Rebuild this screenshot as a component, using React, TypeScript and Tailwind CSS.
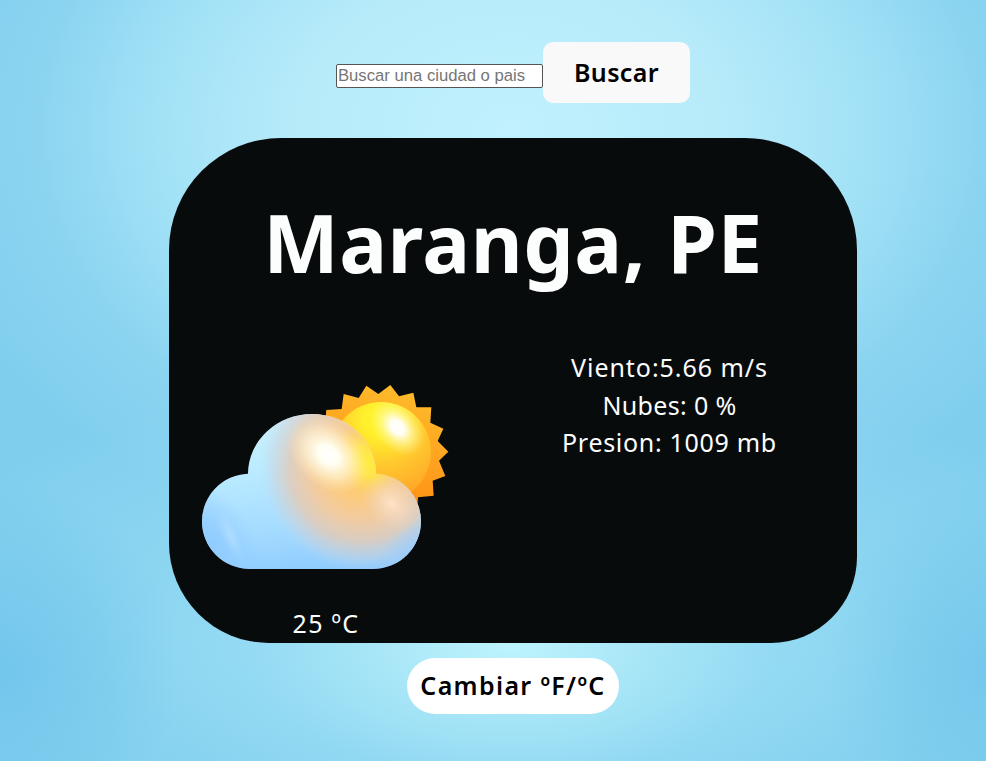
function WeatherIcon() {
  return (
    <svg viewBox="0 0 810 630" className="block h-[210px] w-[270px]" aria-label="Parcialmente nublado">
      <defs>
        <linearGradient id="rays" x1="0.9" y1="0" x2="0.6" y2="1">
          <stop offset="0" stopColor="#ffc02c" />
          <stop offset="0.5" stopColor="#ffa621" />
          <stop offset="1" stopColor="#ff8f14" />
        </linearGradient>
        <radialGradient id="disc" gradientUnits="userSpaceOnUse" cx="575" cy="145" r="250">
          <stop offset="0" stopColor="#fff62a" />
          <stop offset="0.22" stopColor="#fff02c" />
          <stop offset="0.55" stopColor="#ffc92e" />
          <stop offset="1" stopColor="#ffa328" />
        </radialGradient>
        <radialGradient id="shine" gradientUnits="userSpaceOnUse" cx="0" cy="0" r="1" gradientTransform="translate(622 172) rotate(48) scale(98 68)">
          <stop offset="0" stopColor="#fff" />
          <stop offset="0.25" stopColor="#fff" stopOpacity="0.95" />
          <stop offset="0.6" stopColor="#fffbc0" stopOpacity="0.5" />
          <stop offset="1" stopColor="#fff6a0" stopOpacity="0" />
        </radialGradient>
        <linearGradient id="cloud" x1="0.3" y1="0.15" x2="0.42" y2="0.98">
          <stop offset="0" stopColor="#d4eff8" />
          <stop offset="0.35" stopColor="#bcecff" />
          <stop offset="0.7" stopColor="#a6ddff" />
          <stop offset="1" stopColor="#8dcafe" />
        </linearGradient>
        <radialGradient id="shade" gradientUnits="userSpaceOnUse" cx="0" cy="0" r="1" gradientTransform="translate(60 520) rotate(55) scale(200 135)">
          <stop offset="0" stopColor="#90ccff" />
          <stop offset="0.4" stopColor="#90ccff" stopOpacity="0.7" />
          <stop offset="1" stopColor="#90ccff" stopOpacity="0" />
        </radialGradient>
        <radialGradient id="warm" gradientUnits="userSpaceOnUse" cx="0" cy="0" r="1" gradientTransform="translate(510 300) rotate(55) scale(310 300)">
          <stop offset="0" stopColor="#ffcb63" />
          <stop offset="0.28" stopColor="#fccb7f" />
          <stop offset="0.5" stopColor="#f3cba0" stopOpacity="0.97" />
          <stop offset="0.7" stopColor="#e2cbb8" stopOpacity="0.85" />
          <stop offset="0.86" stopColor="#cfd2d8" stopOpacity="0.5" />
          <stop offset="1" stopColor="#b8dcf6" stopOpacity="0" />
        </radialGradient>
        <radialGradient id="corner" gradientUnits="userSpaceOnUse" cx="0" cy="0" r="1" gradientTransform="translate(680 550) rotate(-40) scale(150 90)">
          <stop offset="0" stopColor="#9dc9fa" stopOpacity="0.9" />
          <stop offset="1" stopColor="#a8cdf4" stopOpacity="0" />
        </radialGradient>
        <radialGradient id="yellow" gradientUnits="userSpaceOnUse" cx="0" cy="0" r="1" gradientTransform="translate(525 275) rotate(55) scale(120 85)">
          <stop offset="0" stopColor="#ffee3c" />
          <stop offset="0.4" stopColor="#ffe947" stopOpacity="0.85" />
          <stop offset="1" stopColor="#ffd35c" stopOpacity="0" />
        </radialGradient>
        <radialGradient id="glow" gradientUnits="userSpaceOnUse" cx="0" cy="0" r="1" gradientTransform="translate(415 255) rotate(40) scale(138 98)">
          <stop offset="0" stopColor="#fff" />
          <stop offset="0.25" stopColor="#fffff4" />
          <stop offset="0.6" stopColor="#fff4d4" stopOpacity="0.65" />
          <stop offset="1" stopColor="#ffe4b0" stopOpacity="0" />
        </radialGradient>
        <radialGradient id="puff" gradientUnits="userSpaceOnUse" cx="0" cy="0" r="1" gradientTransform="translate(605 400) rotate(45) scale(100 74)">
          <stop offset="0" stopColor="#ffe3c4" />
          <stop offset="0.35" stopColor="#f8dcc2" stopOpacity="0.7" />
          <stop offset="1" stopColor="#ecd4c0" stopOpacity="0" />
        </radialGradient>
        <radialGradient id="streak" gradientUnits="userSpaceOnUse" cx="0" cy="0" r="1" gradientTransform="translate(120 495) rotate(66) scale(88 27)">
          <stop offset="0" stopColor="#b8e0ff" stopOpacity="0.75" />
          <stop offset="1" stopColor="#b4ddff" stopOpacity="0" />
        </radialGradient>
        <clipPath id="cloudShape">
          <circle cx="179" cy="454" r="143" />
          <circle cx="550" cy="454" r="143" />
          <path d="M174 312A192 180 0 0 1 558 312L550 597H179Z" />
        </clipPath>
      </defs>
      <path
        fill="url(#rays)"
        d="M409 120L455 117L461 72L506 84L529 47L565 72L601 45L627 79L670 68L679 112L724 112L721 158L760 176L743 213L775 245L747 272L766 318L728 332L731 377L684 382L683 398L550 420L400 220Z"
      />
      <circle cx="573" cy="246" r="150" fill="url(#disc)" />
      <circle cx="573" cy="246" r="150" fill="url(#shine)" />
      <g clipPath="url(#cloudShape)">
        <rect width="810" height="630" fill="url(#cloud)" />
        <rect width="810" height="630" fill="url(#shade)" />
        <rect width="810" height="630" fill="url(#warm)" />
        <rect width="810" height="630" fill="url(#corner)" />
        <rect width="810" height="630" fill="url(#yellow)" />
        <rect width="810" height="630" fill="url(#glow)" />
        <rect width="810" height="630" fill="url(#puff)" />
        <rect width="810" height="630" fill="url(#streak)" />
      </g>
    </svg>
  );
}

const details = [
  { text: "Viento:5.66 m/s", style: "tracking-[0.95px]" },
  { text: "Nubes: 0 %", style: "tracking-[0.35px]" },
  { text: "Presion: 1009 mb", style: "tracking-[0.7px]" },
];

export default function App() {
  return (
    <main className="flex h-[761px] flex-col items-center overflow-hidden bg-[#80ceee] bg-[radial-gradient(ellipse_380px_190px_at_510px_645px,#bdf4fd_0%,#aeeaf8cc_35%,#98dcf466_70%,#83cfef00_100%),radial-gradient(ellipse_600px_440px_at_510px_130px,#c0f1fd_0%,#b7ebfa_35%,#a1e1f6_60%,#92d8f2aa_78%,#80ceee00_100%),radial-gradient(ellipse_180px_190px_at_0px_670px,#73c6ec_0%,#73c6ec00_100%),radial-gradient(ellipse_160px_190px_at_986px_670px,#76c8ec_0%,#76c8ec00_100%),radial-gradient(ellipse_620px_260px_at_510px_620px,#90d8f2_0%,#90d8f2_45%,#80ceee00_100%)] pl-[40px] font-['Lucida_Sans','Noto_Sans',sans-serif]">
      <form className="mt-[42px] flex h-[61px] items-start" onSubmit={(e) => e.preventDefault()}>
        <input
          type="text"
          placeholder="Buscar una ciudad o pais"
          className="mt-[22px] h-6 w-[207px] rounded-[2px] border border-[#555] bg-white px-px font-['Liberation_Sans',Arial,sans-serif] text-[16.67px] leading-5 placeholder:text-[#757575]"
        />
        <button className="h-[61px] w-[147px] rounded-[10px] bg-[#f9f9f9] text-[25px] font-semibold leading-[61px] tracking-[0.4px] text-black">
          Buscar
        </button>
      </form>
      <section className="mt-[35px] h-[505px] w-[688px] shrink-0 rounded-[112px_112px_86px_100px] bg-[#080b0c] text-[#fcfdfd]">
        <h1 className="h-[193px] pt-[49px] text-center text-[80px] font-bold leading-[110px] tracking-[0.5px]">Maranga, PE</h1>
        <div className="flex">
          <div className="flex w-[313px] flex-col items-center">
            <div className="mt-[39px] pr-[2px]">
              <WeatherIcon />
            </div>
            <p className="mt-[25px] pl-px text-center text-[25px] leading-[37.5px] tracking-[1.3px]">25 ºC</p>
          </div>
          <div className="flex flex-1 flex-col items-center pt-[18px] text-[25px] leading-[37.5px]">
            {details.map((d) => (
              <p key={d.text} className={d.style}>{d.text}</p>
            ))}
          </div>
        </div>
      </section>
      <button className="mt-[15px] h-[56px] w-[212px] shrink-0 rounded-[28px] bg-white pb-[2px] text-[25px] font-semibold leading-[54px] tracking-[1.35px] text-black">
        Cambiar ºF/ºC
      </button>
    </main>
  );
}
